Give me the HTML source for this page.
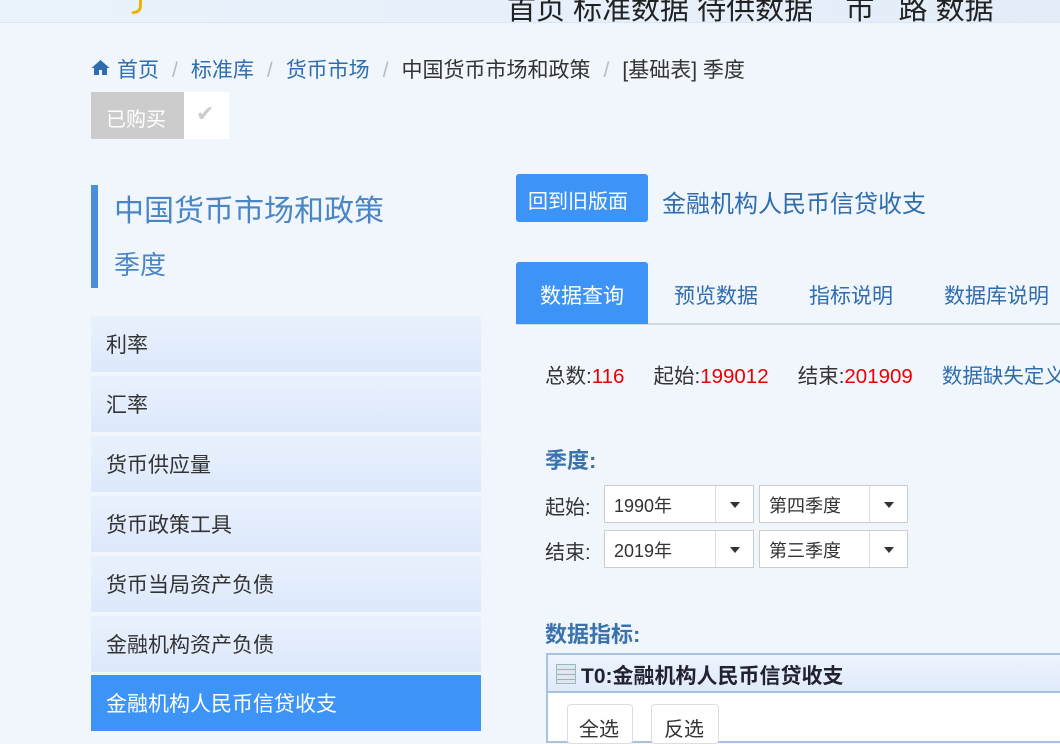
<!DOCTYPE html>
<html><head><meta charset="utf-8"><style>
*{margin:0;padding:0;box-sizing:border-box}
body{width:1060px;height:739px;overflow:hidden;background:#f1f6fc;font-family:"Liberation Sans","Noto Sans CJK SC",sans-serif;position:relative;color:#333}
.a{position:absolute;white-space:nowrap}
.top{position:absolute;left:0;top:0;width:1060px;height:23px;background:linear-gradient(90deg,#eaf2fb,#e3edf9);border-bottom:1px solid #dbe6f3}
.side{left:91px;width:390px;height:56px;background:linear-gradient(180deg,#e9f1fd,#dce8fb);font-size:21px;color:#333;padding:13px 15px}
.tab{top:262px;height:62px;font-size:21px;color:#2d6db0;padding-top:18px}
.sel{position:absolute;height:38px;background:#fff;border:1px solid #ccc;font-size:18px;padding:6px 9px}
.sel i{position:absolute;right:0;top:0;width:38px;height:36px;border-left:1px solid #ddd}
.sel i:after{content:"";position:absolute;left:14px;top:16px;border:5px solid transparent;border-top:6px solid #333}
.sp{color:#bbb;margin:0 13px}
</style></head><body>
<div class="top"></div>
<div class="a" style="left:130px;top:-8px;width:12px;height:22px;border:3px solid #f0b400;border-color:transparent #f0b400 #f0b400 transparent;border-radius:0 0 12px 6px"></div>
<div class="a" style="left:507px;top:-14px;font-size:29px;color:#222">首页 标准数据 待供数据 &nbsp; &nbsp;市 &nbsp; 路 数据</div>
<svg class="a" style="left:91px;top:59px" width="19" height="17" viewBox="0 0 19 17"><path d="M9.5 1L0.5 9h2.5v7h5v-5h3v5h5V9h2.5z" fill="#2d6db0"/></svg>
<div class="a" style="left:117px;top:54px;font-size:21px;color:#2d6db0">首页<span class="sp">/</span>标准库<span class="sp">/</span>货币市场<span class="sp">/</span><span style="color:#333">中国货币市场和政策</span><span class="sp">/</span><span style="color:#333">[基础表] 季度</span></div>
<div class="a" style="left:91px;top:92px;width:93px;height:47px;background:#ccc;color:#fff;font-size:20px;padding:11px 15px">已购买</div>
<div class="a" style="left:184px;top:92px;width:45px;height:47px;background:#fff;color:#ccc;font-size:22px;padding:9px 12px">✔</div>
<div class="a" style="left:91px;top:185px;width:7px;height:103px;background:#4a90d9"></div>
<div class="a" style="left:114px;top:186px;font-size:30px;color:#4a86c5">中国货币市场和政策</div>
<div class="a" style="left:114px;top:245px;font-size:26px;color:#4a86c5">季度</div>
<div class="a side" style="top:316px">利率</div>
<div class="a side" style="top:376px">汇率</div>
<div class="a side" style="top:436px">货币供应量</div>
<div class="a side" style="top:496px">货币政策工具</div>
<div class="a side" style="top:556px">货币当局资产负债</div>
<div class="a side" style="top:616px">金融机构资产负债</div>
<div class="a side" style="top:675px;background:#3d94f6;color:#fff">金融机构人民币信贷收支</div>
<div class="a" style="left:516px;top:174px;width:132px;height:48px;background:#3d94f6;border-radius:3px;color:#fff;font-size:20px;padding:11px 12px">回到旧版面</div>
<div class="a" style="left:662px;top:184px;font-size:24px;color:#2d6db0">金融机构人民币信贷收支</div>
<div class="a" style="left:516px;top:323px;width:544px;height:2px;background:#d0d8e2"></div>
<div class="a tab" style="left:516px;width:132px;background:#3d94f6;color:#fff;border-radius:3px 3px 0 0;text-align:center">数据查询</div>
<div class="a tab" style="left:674px">预览数据</div>
<div class="a tab" style="left:809px">指标说明</div>
<div class="a tab" style="left:944px">数据库说明</div>
<div class="a" style="left:545px;top:359px;font-size:20.5px;color:#333;word-spacing:4px">总数:<span style="color:#e00">116</span> &nbsp; 起始:<span style="color:#e00">199012</span> &nbsp; 结束:<span style="color:#e00">201909</span> &nbsp; <span style="color:#2d6db0">数据缺失定义</span></div>
<div class="a" style="left:545px;top:443px;font-size:22px;font-weight:bold;color:#3a72ae">季度:</div>
<div class="a" style="left:545px;top:491px;font-size:20px">起始:</div>
<div class="a" style="left:545px;top:536px;font-size:20px">结束:</div>
<div class="sel" style="left:604px;top:485px;width:150px">1990年<i></i></div>
<div class="sel" style="left:759px;top:485px;width:149px">第四季度<i></i></div>
<div class="sel" style="left:604px;top:530px;width:150px">2019年<i></i></div>
<div class="sel" style="left:759px;top:530px;width:149px">第三季度<i></i></div>
<div class="a" style="left:545px;top:617px;font-size:22px;font-weight:bold;color:#3a72ae">数据指标:</div>
<div class="a" style="left:546px;top:653px;width:520px;height:90px;border:2px solid #a7c2e3;background:#fff"></div>
<div class="a" style="left:548px;top:655px;width:520px;height:38px;background:linear-gradient(180deg,#eef4fd,#dfeafa);border-bottom:2px solid #a7c2e3"></div>
<div class="a" style="left:556px;top:664px;width:20px;height:20px;border:1px solid #9bb;background:repeating-linear-gradient(180deg,#dfe8ee 0 4px,#aab 4px 5px)"></div>
<div class="a" style="left:581px;top:660px;font-size:21px;font-weight:bold;color:#223">T0:金融机构人民币信贷收支</div>
<div class="a" style="left:567px;top:704px;width:66px;height:40px;border:1px solid #ddd;border-radius:4px;background:#fff;font-size:20px;padding:8px 11px">全选</div>
<div class="a" style="left:651px;top:704px;width:68px;height:40px;border:1px solid #ddd;border-radius:4px;background:#fff;font-size:20px;padding:8px 12px">反选</div>
</body></html>
